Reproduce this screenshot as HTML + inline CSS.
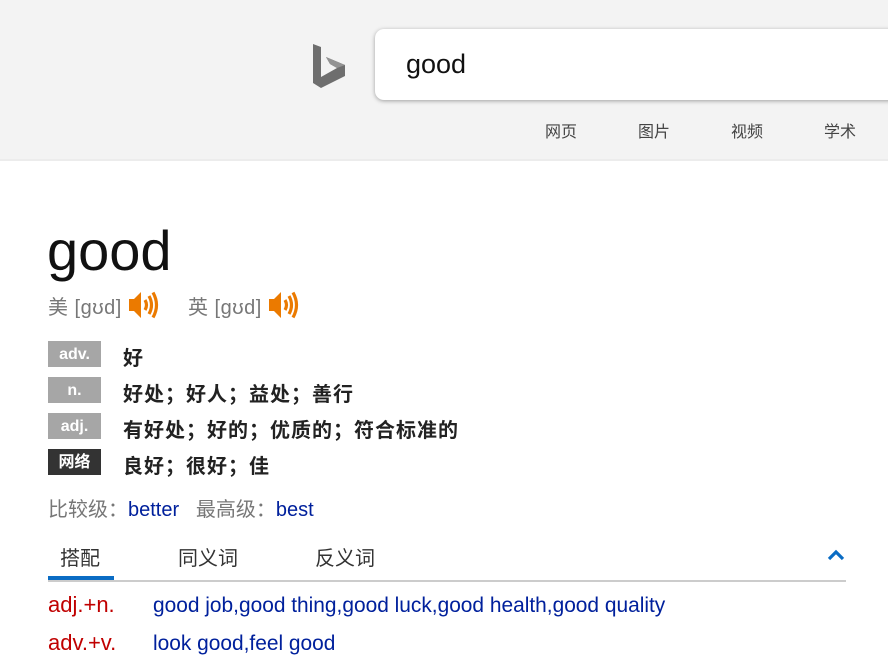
<!DOCTYPE html>
<html><head><meta charset="utf-8"><style>
body{margin:0;width:888px;height:670px;overflow:hidden;background:#fff;font-family:"Liberation Sans","Noto Sans CJK SC",sans-serif;position:relative}
.a{position:absolute;white-space:nowrap}
#hdr{position:absolute;left:0;top:0;width:888px;height:159px;background:#f3f3f3;border-bottom:2px solid #ececec}
#box{position:absolute;left:375px;top:29px;width:540px;height:71px;background:#fff;border-radius:9px;box-shadow:0 1px 4px rgba(0,0,0,.35)}
.nav{font-size:16px;color:#444;top:118px}
.tag{position:absolute;left:48px;width:53px;height:26px;background:#a6a6a6;color:#fff;font-weight:bold;font-size:16px;text-align:center;line-height:28px}
.df{left:123px;font-size:20px;font-weight:bold;color:#222;letter-spacing:1px}
.blue{color:#00209c}
.red{color:#c00000}
</style></head><body>
<div id="hdr"></div>
<svg class="a" style="left:0;top:0" width="360" height="100">
<path d="M313,44 L321,47 L321,77 L337,68 L330,64 L326,57 L345,65 L345,76 L321,88 L313,83 Z" fill="#6e6e6e"/>
<path d="M326,57 L345,65 L337,68 L330,64 Z" fill="#939393"/>
</svg>
<div id="box"></div>
<div class="a" style="left:406px;top:49px;font-size:27px;color:#111">good</div>
<div class="a nav" style="left:545px">网页</div>
<div class="a nav" style="left:638px">图片</div>
<div class="a nav" style="left:731px">视频</div>
<div class="a nav" style="left:824px">学术</div>

<div class="a" style="left:47px;top:218px;font-size:56px;color:#111">good</div>
<div class="a" style="left:48px;top:291px;font-size:20px;color:#777;letter-spacing:0.5px">美 [gʊd]</div>
<div class="a" style="left:188px;top:291px;font-size:20px;color:#777;letter-spacing:0.5px">英 [gʊd]</div>
<svg class="a" style="left:128px;top:290px" width="32" height="30"><path d="M1,9 H6 L13,2 V28 L6,21 H1 Z" fill="#eb7a00"/><path d="M17,10 Q20,15 17,20 M21,6 Q26,15 21,24 M25,2.5 Q32,15 25,27.5" stroke="#eb7a00" stroke-width="3.2" fill="none"/></svg>
<svg class="a" style="left:268px;top:290px" width="32" height="30"><path d="M1,9 H6 L13,2 V28 L6,21 H1 Z" fill="#eb7a00"/><path d="M17,10 Q20,15 17,20 M21,6 Q26,15 21,24 M25,2.5 Q32,15 25,27.5" stroke="#eb7a00" stroke-width="3.2" fill="none"/></svg>

<div class="tag" style="top:341px">adv.</div><div class="a df" style="top:342px">好</div>
<div class="tag" style="top:377px">n.</div><div class="a df" style="top:378px">好处；好人；益处；善行</div>
<div class="tag" style="top:413px">adj.</div><div class="a df" style="top:414px">有好处；好的；优质的；符合标准的</div>
<div class="tag" style="top:449px;background:#333">网络</div><div class="a df" style="top:450px">良好；很好；佳</div>

<div class="a" style="left:48px;top:493px;font-size:20px;color:#777">比较级：<span class="blue">better</span>&nbsp;&nbsp;&nbsp;最高级：<span class="blue">best</span></div>

<div class="a" style="left:60px;top:542px;font-size:20px;color:#333">搭配</div>
<div class="a" style="left:178px;top:542px;font-size:20px;color:#333">同义词</div>
<div class="a" style="left:315px;top:542px;font-size:20px;color:#333">反义词</div>
<svg class="a" style="left:826px;top:548px" width="22" height="14"><path d="M3,11 L10,4 L17,11" stroke="#0a6cc4" stroke-width="3.2" fill="none"/></svg>
<div class="a" style="left:48px;top:580px;width:798px;height:2px;background:#ccc"></div>
<div class="a" style="left:48px;top:576px;width:66px;height:4px;background:#0a6cc4"></div>

<div class="a red" style="left:48px;top:592px;font-size:22px">adj.+n.</div>
<div class="a blue" style="left:153px;top:594px;font-size:20.9px">good job,good thing,good luck,good health,good quality</div>
<div class="a red" style="left:48px;top:630px;font-size:22px">adv.+v.</div>
<div class="a blue" style="left:153px;top:632px;font-size:20.9px">look good,feel good</div>
</body></html>
